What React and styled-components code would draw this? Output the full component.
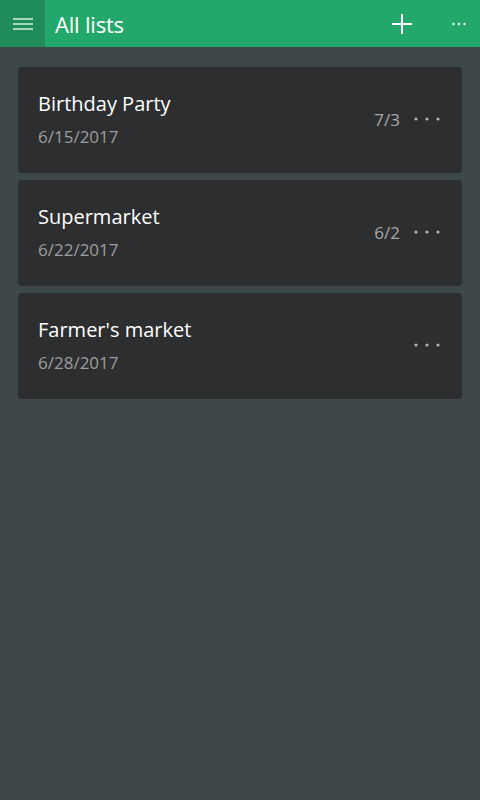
import React from 'react'
import styled, { createGlobalStyle } from 'styled-components'

const Global = createGlobalStyle`
    html, body {
        margin: 0;
        padding: 0;
        background: #3e4749;
        font-family: "Open Sans", "Noto Sans", sans-serif;
    }
`

const Page = styled.div`
    width: 480px;
    height: 800px;
    background: #3e4749;
    display: flex;
    flex-direction: column;
`

const TopBar = styled.header`
    height: 47px;
    background: #22a86b;
    display: flex;
    align-items: center;
    color: #fff;
`

const MenuButton = styled.button`
    width: 45px;
    height: 47px;
    border: 0;
    padding: 0;
    background: #1f8c5a;
    display: flex;
    align-items: center;
    justify-content: center;
`

const Title = styled.h1`
    flex: 1;
    margin: 0 0 0 10px;
    font-size: 22px;
    font-weight: 400;
    letter-spacing: -0.2px;
`

const BarIcon = styled.button`
    width: ${p => p.$w}px;
    height: 47px;
    border: 0;
    padding: 0;
    margin-right: ${p => p.$mr || 0}px;
    background: transparent;
    display: flex;
    align-items: center;
    justify-content: center;
`

const List = styled.main`
    display: flex;
    flex-direction: column;
    gap: 7px;
    padding: 20px 18px;
`

const Card = styled.section`
    height: 106px;
    background: #2d2e30;
    border-radius: 4px;
    display: flex;
    align-items: center;
    padding: 0 22px 2px 20px;
    box-sizing: border-box;
`

const Info = styled.div`
    flex: 1;
    display: flex;
    flex-direction: column;
    gap: 8px;
`

const Name = styled.div`
    color: #fff;
    font-size: 20px;
    line-height: 28px;
`

const Date = styled.div`
    color: #9d9e9f;
    font-size: 17px;
    line-height: 22px;
`

const Count = styled.span`
    color: #a9a9a9;
    font-size: 17px;
    margin-right: 14px;
`

const Dots = ({ color = '#b5b5b5', r = 1.6 }) => (
    <svg width="26" height="6" viewBox="0 0 26 6">
        <circle cx="2" cy="3" r={r} fill={color} />
        <circle cx="13" cy="3" r={r} fill={color} />
        <circle cx="24" cy="3" r={r} fill={color} />
    </svg>
)

const lists = [
    { name: 'Birthday Party', date: '6/15/2017', count: '7/3' },
    { name: 'Supermarket', date: '6/22/2017', count: '6/2' },
    { name: "Farmer's market", date: '6/28/2017' },
]

export default function App() {
    return (
        <Page>
            <Global />
            <TopBar>
                <MenuButton>
                    <svg width="20" height="12" viewBox="0 0 20 12">
                        <path d="M0 1h20M0 6h20M0 11h20" stroke="#d6efe2" strokeWidth="1.4" />
                    </svg>
                </MenuButton>
                <Title>All lists</Title>
                <BarIcon $w={40} $mr={21}>
                    <svg width="20" height="20" viewBox="0 0 20 20">
                        <path d="M10 0v20M0 10h20" stroke="#fff" strokeWidth="2" />
                    </svg>
                </BarIcon>
                <BarIcon $w={32} $mr={5}>
                    <svg width="14" height="4" viewBox="0 0 14 4">
                        <circle cx="1.5" cy="2" r="1.2" fill="#fff" />
                        <circle cx="7" cy="2" r="1.2" fill="#fff" />
                        <circle cx="12.5" cy="2" r="1.2" fill="#fff" />
                    </svg>
                </BarIcon>
            </TopBar>
            <List>
                {lists.map(l => (
                    <Card key={l.name}>
                        <Info>
                            <Name>{l.name}</Name>
                            <Date>{l.date}</Date>
                        </Info>
                        {l.count && <Count>{l.count}</Count>}
                        <Dots />
                    </Card>
                ))}
            </List>
        </Page>
    )
}
